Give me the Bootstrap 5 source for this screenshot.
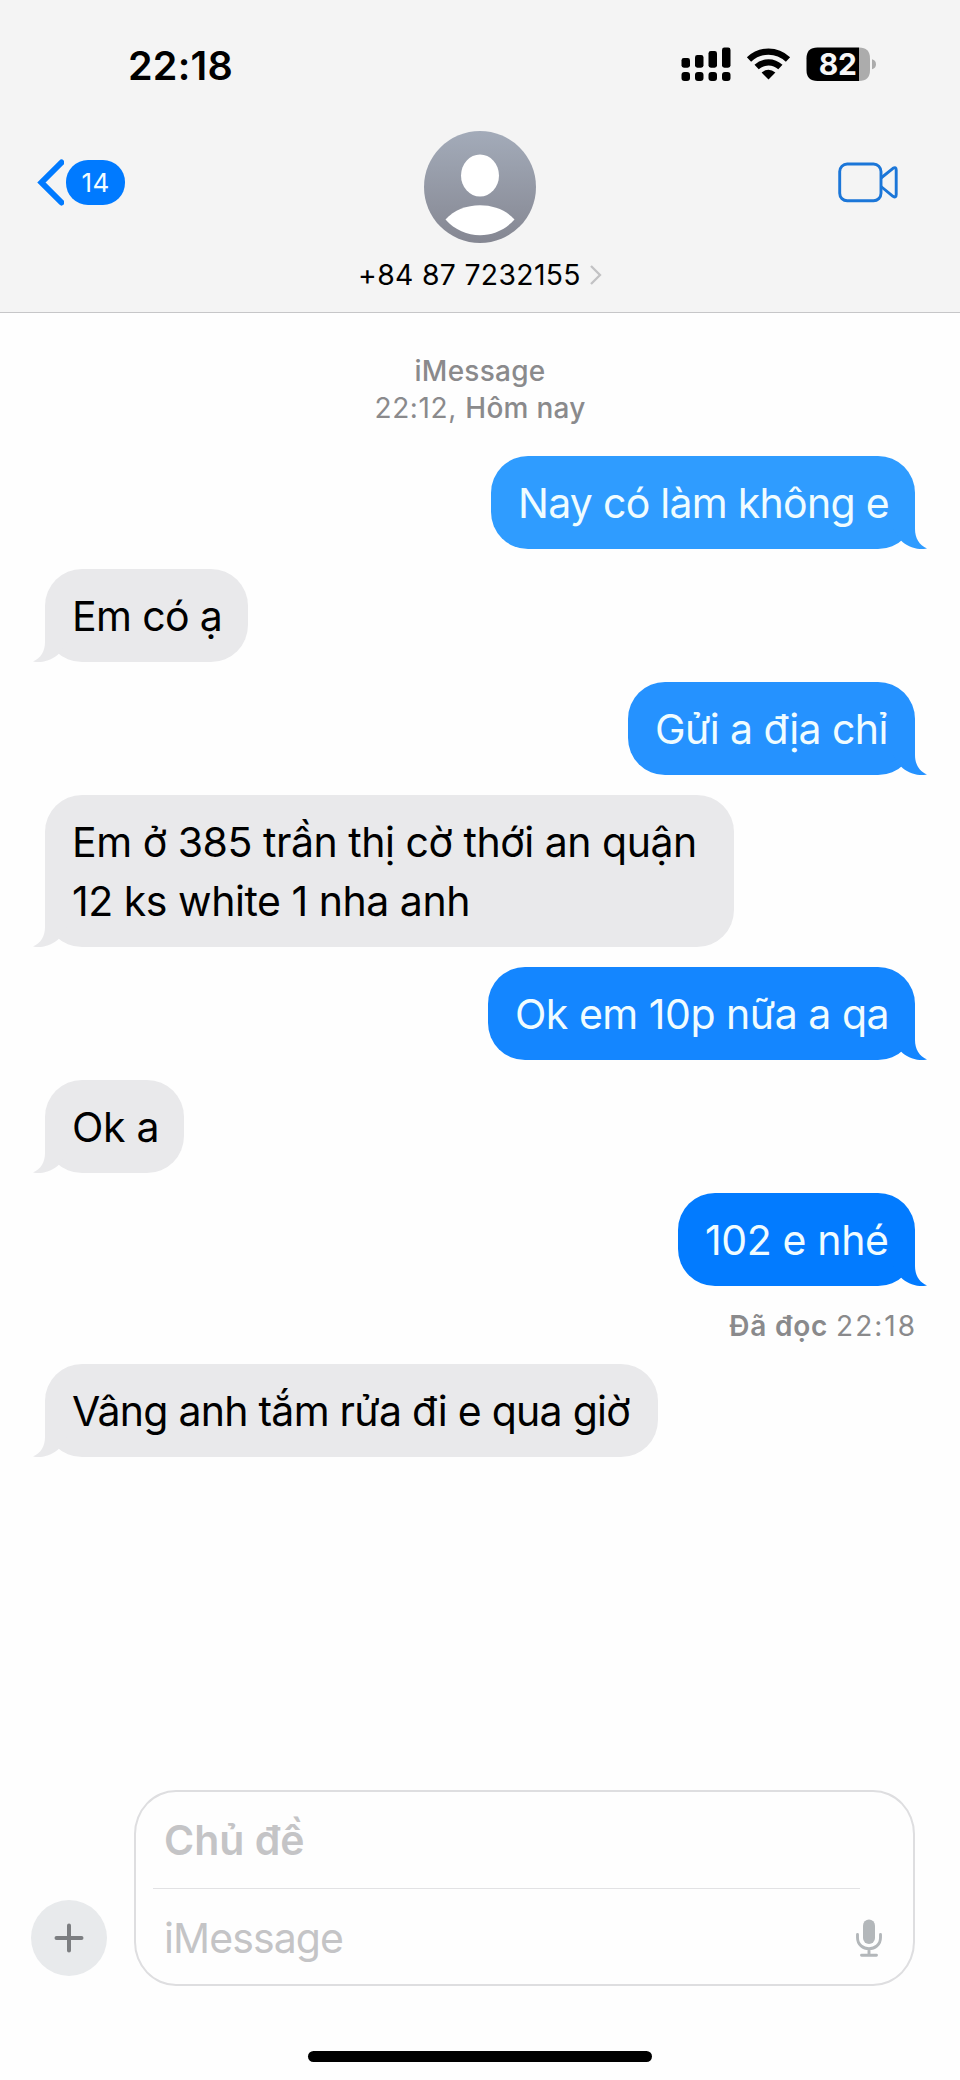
<!DOCTYPE html>
<html lang="vi">
<head>
<meta charset="utf-8">
<meta name="viewport" content="width=device-width, initial-scale=1">
<title>Tin nhắn</title>
<link href="https://cdn.jsdelivr.net/npm/bootstrap@5.3.0/dist/css/bootstrap.min.css" rel="stylesheet">
<style>
body{font-family:Inter,"Noto Sans",sans-serif;background:#fefefe;color:#000;height:2080px;overflow:hidden}
svg{display:block;flex:none}
.top-bar{height:313px;background:#f4f4f4;border-bottom:1px solid #c6c6c8}
.status{height:120px;padding:0 84px 0 128px}
.clock{font-size:39.5px;font-weight:600;line-height:48px;letter-spacing:.25px;margin-top:42px}
.status-icons{margin-top:46px}
.pct{font:700 30px Inter,sans-serif;letter-spacing:-.4px;fill:#f6f6f6}
.nav-row{height:192px;padding:0 60px 0 37px}
.side{width:290px}
.side.back{width:313px;margin-top:39px}
.count{width:59px;height:45px;border-radius:22px;background:#007aff;color:#f2fdff;font-size:26px;line-height:45px;letter-spacing:.4px;margin-left:2px}
.video{margin-top:40px}
.avatar{margin-top:11px}
.phone{font-size:28.3px;line-height:34px;letter-spacing:.35px;margin-top:15px;gap:8px;white-space:nowrap}
.stamp{font-size:28px;font-weight:500;line-height:37px;letter-spacing:.25px;color:#8a8a8c;padding-top:40px;height:143px}
.stamp .hour{font-weight:400;letter-spacing:.6px}
.thread{padding:0 45px;gap:20px;height:1335px}
.bubble{position:relative;font-size:41px;line-height:59px;padding:18px 0 16px 27px;border-radius:37px;white-space:nowrap}
.in{background:#e9e9eb;align-self:flex-start}
.out{color:#f0fcff;align-self:flex-end;background:var(--c)}
.m1{--c:#2f9cff;width:424px;letter-spacing:-.73px}
.m2{width:203px;letter-spacing:-.65px}
.m3{--c:#2592ff;width:287px;letter-spacing:-.6px}
.m4{width:689px;letter-spacing:-.47px}
.m5{--c:#1486ff;width:427px;letter-spacing:-.48px}
.m6{width:139px;letter-spacing:-.3px}
.m7{--c:#027bff;width:237px;letter-spacing:-.37px}
.m8{width:613px;letter-spacing:-.74px}
.tail{position:absolute;bottom:0;width:34px;height:42px}
.out .tail{right:-12px;fill:var(--c)}
.in .tail{left:-12px;transform:scaleX(-1);fill:#e9e9eb}
.receipt{font-size:28px;line-height:38px;color:#8a8a8c;align-self:flex-end;white-space:nowrap;position:relative;top:1px}
.receipt b{font-weight:600;letter-spacing:.8px}
.receipt span{letter-spacing:2px;margin-right:-2px}
.composer{height:195px;padding:0 45px 0 31px}
.plus{width:76px;height:76px;border-radius:50%;background:#e8eaec;margin-bottom:10px}
.field{width:781px;height:196px;border:2px solid #dedee0;border-radius:42px/44px;padding:0 26px 0 17px}
.ph{color:#c4c4c6;font-size:41px;line-height:96px;padding-left:11px}
.subject{font-weight:600;width:707px;height:97px;border-bottom:1px solid #e2e2e4}
.message{letter-spacing:-.9px;line-height:98px}
.home{width:344px;height:11px;border-radius:6px;background:#000;margin:65px auto 0}
</style>
</head>
<body>
<header class="top-bar">
  <div class="status d-flex justify-content-between align-items-start">
    <div class="clock">22:18</div>
    <div class="status-icons d-flex">
      <svg width="196" height="36" viewBox="680 46 196 36">
        <g><rect x="681.5" y="58" width="8.5" height="9.7" rx="2.4"/><rect x="695" y="55" width="8.5" height="12.7" rx="2.4"/><rect x="708.5" y="51" width="8.5" height="16.7" rx="2.4"/><rect x="722" y="47.5" width="8.5" height="20.2" rx="2.4"/>
        <rect x="681.5" y="72" width="8.5" height="9" rx="3"/><rect x="695" y="72" width="8.5" height="9" rx="3"/><rect x="708.5" y="72" width="8.5" height="9" rx="3"/><rect x="722" y="72" width="8.5" height="9" rx="3"/></g>
        <g fill="none" stroke="#000" stroke-width="6.2"><path d="M749 59.4C760.300 48.900 776.700 48.900 788 59.400"/><path d="M756.600 67.100C763.500 60.700 773.500 60.700 780.400 67.100"/></g>
        <path d="M761.600 72.500Q768.500 67 775.400 72.500L768.500 79.500Z"/>
        <path d="M817.500 47.500H859V81H817.500Q806.500 81 806.500 70V58.500Q806.500 47.500 817.500 47.500Z"/>
        <path d="M859 47.500Q870 47.500 870 58.500V70Q870 81 859 81Z" fill="#acacac"/>
        <path d="M872 59.300Q876 60.500 876 64.300Q876 68.100 872 69.300Z" fill="#acacac"/>
        <text class="pct" x="818.800" y="75.200">82</text>
      </svg>
    </div>
  </div>
  <div class="nav-row d-flex justify-content-between align-items-start">
    <div class="side d-flex align-items-center back">
      <svg width="27" height="47" viewBox="0 0 27 47"><path d="M24.500 3.500L4.500 23.500L24.500 43.500" fill="none" stroke="#007aff" stroke-width="6" stroke-linecap="round" stroke-linejoin="miter"/></svg>
      <div class="count text-center">14</div>
    </div>
    <div class="d-flex flex-column align-items-center">
      <svg class="avatar" width="112" height="112" viewBox="0 0 112 112"><defs><linearGradient id="av" x1="0" y1="0" x2="0" y2="1"><stop offset="0" stop-color="#a3abb9"/><stop offset="1" stop-color="#858792"/></linearGradient></defs><circle cx="56" cy="56" r="56" fill="url(#av)"/><ellipse cx="56" cy="44.500" rx="19" ry="21" fill="#fff"/><path d="M21.500 88.500C38 69.500 74 69.500 90.500 88.500C72 109.500 40 109.500 21.500 88.500Z" fill="#fff"/></svg>
      <div class="phone d-flex align-items-center"><span>+84 87 7232155</span><svg width="13" height="22" viewBox="0 0 13 22"><path d="M2 2L11 11L2 20" fill="none" stroke="#c2c2c4" stroke-width="2.300"/></svg></div>
    </div>
    <div class="side d-flex justify-content-end video">
      <svg width="62" height="44" viewBox="0 0 62 44"><g fill="none" stroke="#1b76d8" stroke-width="2.900" stroke-linejoin="round"><rect x="1.700" y="4" width="41.300" height="36.800" rx="7.500"/><path d="M43 18L55 8.300Q58.200 6.300 58.200 10V34.500Q58.200 38.300 55 36.300L43 26.500"/></g></svg>
    </div>
  </div>
</header>
<div class="stamp text-center"><div>iMessage</div><div><span class="hour">22:12, </span>Hôm nay</div></div>
<main class="thread d-flex flex-column">
  <div class="bubble out m1">Nay có làm không e<svg class="tail" viewBox="0 -8 34 42"><path d="M0 -8H22V14C22 23 26 30 34 33.600C24 35.500 14 31.500 8 25.500L0 14Z"/></svg></div>
  <div class="bubble in m2">Em có ạ<svg class="tail" viewBox="0 -8 34 42"><path d="M0 -8H22V14C22 23 26 30 34 33.600C24 35.500 14 31.500 8 25.500L0 14Z"/></svg></div>
  <div class="bubble out m3">Gửi a địa chỉ<svg class="tail" viewBox="0 -8 34 42"><path d="M0 -8H22V14C22 23 26 30 34 33.600C24 35.500 14 31.500 8 25.500L0 14Z"/></svg></div>
  <div class="bubble in m4">Em ở 385 trần thị cờ thới an quận<br>12 ks white 1 nha anh<svg class="tail" viewBox="0 -8 34 42"><path d="M0 -8H22V14C22 23 26 30 34 33.600C24 35.500 14 31.500 8 25.500L0 14Z"/></svg></div>
  <div class="bubble out m5">Ok em 10p nữa a qa<svg class="tail" viewBox="0 -8 34 42"><path d="M0 -8H22V14C22 23 26 30 34 33.600C24 35.500 14 31.500 8 25.500L0 14Z"/></svg></div>
  <div class="bubble in m6">Ok a<svg class="tail" viewBox="0 -8 34 42"><path d="M0 -8H22V14C22 23 26 30 34 33.600C24 35.500 14 31.500 8 25.500L0 14Z"/></svg></div>
  <div class="bubble out m7">102 e nhé<svg class="tail" viewBox="0 -8 34 42"><path d="M0 -8H22V14C22 23 26 30 34 33.600C24 35.500 14 31.500 8 25.500L0 14Z"/></svg></div>
  <div class="receipt"><b>Đã đọc</b> <span>22:18</span></div>
  <div class="bubble in m8">Vâng anh tắm rửa đi e qua giờ<svg class="tail" viewBox="0 -8 34 42"><path d="M0 -8H22V14C22 23 26 30 34 33.600C24 35.500 14 31.500 8 25.500L0 14Z"/></svg></div>
</main>
<footer>
  <div class="composer d-flex justify-content-between align-items-end">
    <div class="plus d-flex align-items-center justify-content-center"><svg width="30" height="30" viewBox="0 0 30 30"><path d="M15 2.500V27.500M2.500 15H27.500" stroke="#7c7e81" stroke-width="4" stroke-linecap="round"/></svg></div>
    <div class="field">
      <div class="ph subject">Chủ đề</div>
      <div class="d-flex align-items-center justify-content-between">
        <div class="ph message">iMessage</div>
        <svg class="me-1" width="28" height="40" viewBox="0 0 28 40"><rect x="8" y="1.500" width="12" height="24.500" rx="6" fill="#b3b7ba"/><path d="M2.500 16.500V19.500C2.500 34.500 25.500 34.500 25.500 19.500V16.500M14 31V36.500M6.500 37.200H21.500" fill="none" stroke="#b3b7ba" stroke-width="2.900" stroke-linecap="round"/></svg>
      </div>
    </div>
  </div>
  <div class="home"></div>
</footer>
<script src="https://cdn.jsdelivr.net/npm/bootstrap@5.3.0/dist/js/bootstrap.bundle.min.js"></script>
</body>
</html>
